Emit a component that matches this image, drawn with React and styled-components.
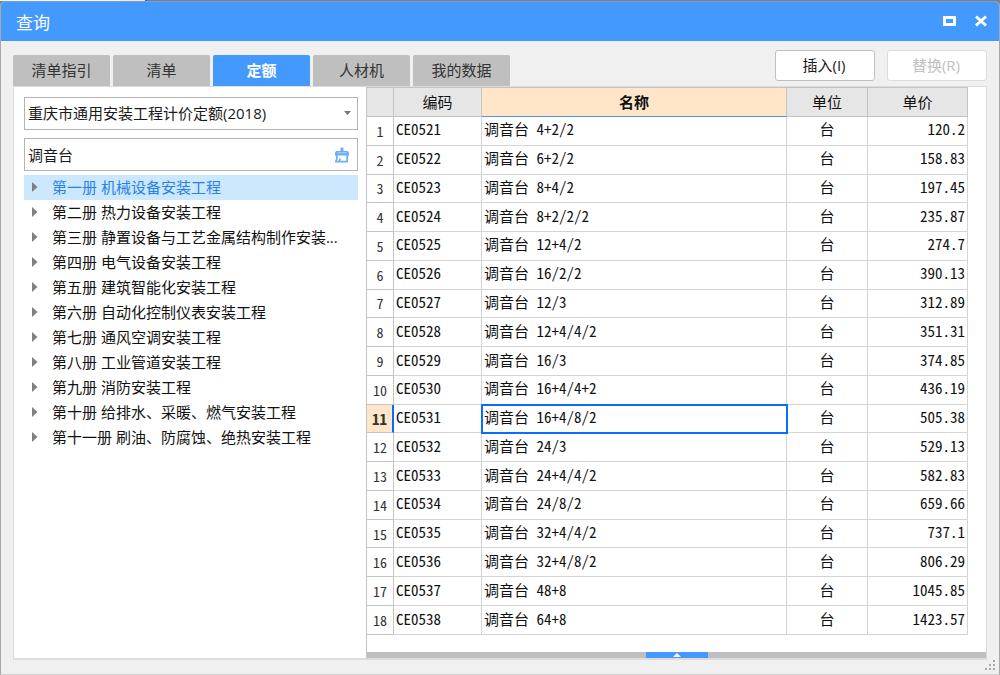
import React, { useState } from "react";
import styled, { createGlobalStyle } from "styled-components";

const GlobalStyle = createGlobalStyle`
  *, *::before, *::after { box-sizing: border-box; }
  body { margin: 0; background: #7f7f7f; }
  button, input, select { font: inherit; color: inherit; margin: 0; }
`;

const Desktop = styled.div`
  min-height: 100vh;
  display: flex;
  flex-direction: column;
  font: 15px/20px "Open Sans", "Noto Sans CJK SC", sans-serif;
  color: #1a1a1a;
`;

const Backdrop = styled.div`
  height: 1px;
  display: flex;
  background: #7f7f7f;
`;

const BackdropPiece = styled.span`
  width: ${(p) => p.$width}px;
  background: ${(p) => p.$color};
`;

const Dialog = styled.main`
  flex: 1;
  display: flex;
  flex-direction: column;
  border: 1px solid #a8a8a8;
  border-top-color: #6f9fd6;
  border-bottom-color: #cfcfcf;
  border-radius: 5px 5px 0 0;
  overflow: hidden;
  background: #f0f0f0;
`;

const TitleBar = styled.header`
  height: 39px;
  display: flex;
  align-items: center;
  padding: 0 10px 2px 15px;
  background: #4499ff;
  color: #fff;
`;

const Title = styled.h1`
  flex: 1;
  margin: 0;
  padding-top: 4px;
  font-size: 17px;
  line-height: 24px;
  font-weight: 400;
`;

const WindowControls = styled.div`
  display: flex;
  gap: 16px;
`;

const WindowButton = styled.button`
  width: 16px;
  height: 16px;
  padding: 0;
  border: 0;
  background: none;
  svg { display: block; }
`;

const Toolbar = styled.div`
  display: flex;
  align-items: flex-end;
  justify-content: space-between;
  padding: 9px 12px 0;
`;

const Tabs = styled.div`
  display: flex;
  gap: 3px;
`;

const Tab = styled.button`
  width: 97px;
  height: 31px;
  padding: 0 0 1px;
  border: 0;
  border-radius: 2px 2px 0 0;
  background: ${(p) => (p.$active ? "#4499ff" : "#bfbfbf")};
  color: ${(p) => (p.$active ? "#fff" : "#333")};
  font-weight: ${(p) => (p.$active ? 700 : 400)};
`;

const Actions = styled.div`
  display: flex;
  gap: 12px;
  padding-bottom: 5px;
`;

const ActionButton = styled.button`
  width: 100px;
  height: 31px;
  padding: 0 2px 1px 0;
  border: 1px solid #c0c0c0;
  border-radius: 3px;
  background: #fff;
  &:disabled { color: #c0c0c0; border-color: #dcdcdc; }
`;

const Panel = styled.section`
  flex: 1;
  display: flex;
  margin: 0 12px 14px;
  border: 1px solid #dcdcdc;
  border-bottom-width: 2px;
  background: #fff;
`;

const Sidebar = styled.aside`
  width: 352px;
  flex: none;
  padding: 10px 8px 10px 10px;
`;

const Field = styled.div`
  height: 33px;
  display: flex;
  align-items: center;
  position: relative;
  margin-bottom: 8px;
  border: 1px solid #b4b4b4;
  background: #fff;
`;

const QuotaSelect = styled.select`
  width: 100%;
  height: 100%;
  padding: 0 24px 2px 3px;
  border: 0;
  outline: 0;
  appearance: none;
  background: transparent;
`;

const SelectArrow = styled.svg`
  position: absolute;
  right: 6px;
  top: 13px;
  pointer-events: none;
`;

const SearchInput = styled.input`
  flex: 1;
  min-width: 0;
  height: 100%;
  padding: 0 3px;
  border: 0;
  outline: 0;
  background: transparent;
`;

const ClearButton = styled.button`
  width: 30px;
  height: 100%;
  display: grid;
  place-items: center;
  padding: 0;
  border: 0;
  background: none;
`;

const Tree = styled.ul`
  list-style: none;
  margin: -4px 0 0;
  padding: 0;
`;

const TreeItem = styled.li`
  height: 25px;
  display: flex;
  align-items: center;
  gap: 14px;
  padding: 0 0 1px 8px;
  white-space: nowrap;
  background: ${(p) => (p.$selected ? "#cce8ff" : "transparent")};
  color: ${(p) => (p.$selected ? "#2a80e8" : "#111")};
`;

const GridPane = styled.div`
  flex: 1;
  min-width: 0;
  display: flex;
  flex-direction: column;
  border-left: 1px solid #c4c4c4;
`;

const GridArea = styled.div`
  flex: 1;
  display: grid;
  padding: 0 18px 17px 0;
`;

const QuotaTable = styled.table`
  width: 100%;
  height: 100%;
  table-layout: fixed;
  border-collapse: separate;
  border-spacing: 0;
  font: 15px/20px "Noto Sans CJK SC", sans-serif;
  font-feature-settings: "hwid";
  color: #111;
`;

const Column = styled.col`
  width: ${(p) => (p.$width ? `${p.$width}px` : "auto")};
`;

const HeadCell = styled.th`
  height: 30px;
  padding: 0;
  border: 1px solid #c4c4c4;
  border-left: 0;
  border-bottom-color: ${(p) => (p.$current ? "#4499ff" : "#c4c4c4")};
  background: ${(p) => (p.$current ? "#ffe6c8" : "#e6e6e6")};
  font-weight: ${(p) => (p.$current ? 700 : 400)};
`;

const RowHead = styled.th`
  padding: 0;
  border-bottom: 1px solid #c4c4c4;
  border-right: ${(p) => (p.$current ? "2px solid #0a6cff" : "1px solid #c4c4c4")};
  background: ${(p) => (p.$current ? "#ffe6c8" : "#fff")};
  font-size: ${(p) => (p.$current ? 15 : 14)}px;
  font-weight: ${(p) => (p.$current ? 700 : 400)};
  color: #333;
`;

const Cell = styled.td`
  padding: 0 2px 3px;
  border: 0 solid #d4d4d4;
  border-width: 0 1px 1px 0;
  text-align: ${(p) => p.$align || "left"};
  outline: ${(p) => (p.$current ? "2px solid #0a6cff" : "none")};
  outline-offset: -1px;
`;

const Splitter = styled.div`
  height: 6px;
  display: flex;
  justify-content: center;
  background: #bfbfbf;
`;

const SplitterHandle = styled.button`
  width: 62px;
  height: 6px;
  display: grid;
  place-items: center;
  padding: 0;
  border: 0;
  background: #4499ff;
`;

const ResizeGrip = styled.svg`
  position: absolute;
  right: 4px;
  bottom: 4px;
`;

const tabs = ["清单指引", "清单", "定额", "人材机", "我的数据"];

const volumes = [
  "第一册 机械设备安装工程",
  "第二册 热力设备安装工程",
  "第三册 静置设备与工艺金属结构制作安装...",
  "第四册 电气设备安装工程",
  "第五册 建筑智能化安装工程",
  "第六册 自动化控制仪表安装工程",
  "第七册 通风空调安装工程",
  "第八册 工业管道安装工程",
  "第九册 消防安装工程",
  "第十册 给排水、采暖、燃气安装工程",
  "第十一册 刷油、防腐蚀、绝热安装工程",
];

const rows = [
  ["CE0521", "4+2/2", "120.2"],
  ["CE0522", "6+2/2", "158.83"],
  ["CE0523", "8+4/2", "197.45"],
  ["CE0524", "8+2/2/2", "235.87"],
  ["CE0525", "12+4/2", "274.7"],
  ["CE0526", "16/2/2", "390.13"],
  ["CE0527", "12/3", "312.89"],
  ["CE0528", "12+4/4/2", "351.31"],
  ["CE0529", "16/3", "374.85"],
  ["CE0530", "16+4/4+2", "436.19"],
  ["CE0531", "16+4/8/2", "505.38"],
  ["CE0532", "24/3", "529.13"],
  ["CE0533", "24+4/4/2", "582.83"],
  ["CE0534", "24/8/2", "659.66"],
  ["CE0535", "32+4/4/2", "737.1"],
  ["CE0536", "32+4/8/2", "806.29"],
  ["CE0537", "48+8", "1045.85"],
  ["CE0538", "64+8", "1423.57"],
];

const gripDots = [[8, 0], [4, 4], [8, 4], [0, 8], [4, 8], [8, 8]];

export default function App() {
  const [tab, setTab] = useState(2);
  const [query, setQuery] = useState("调音台");
  const [volume, setVolume] = useState(0);
  const [current, setCurrent] = useState(10);

  return (
    <Desktop>
      <GlobalStyle />
      <Backdrop>
        <BackdropPiece $width={120} $color="#f4f4f4" />
        <BackdropPiece $width={25} $color="#ffe6c8" />
        <BackdropPiece $width={2} $color="#0a6cff" />
      </Backdrop>
      <Dialog>
        <TitleBar>
          <Title>查询</Title>
          <WindowControls>
            <WindowButton aria-label="最大化">
              <svg width="16" height="16" viewBox="0 0 16 16">
                <path d="M3.500 4.500h10v7h-10z" fill="none" stroke="#fff" strokeWidth="3" />
              </svg>
            </WindowButton>
            <WindowButton aria-label="关闭">
              <svg width="16" height="16" viewBox="0 0 16 16">
                <path d="M3 3.500l10 9M13 3.500l-10 9" fill="none" stroke="#fff" strokeWidth="3" />
              </svg>
            </WindowButton>
          </WindowControls>
        </TitleBar>
        <Toolbar>
          <Tabs role="tablist">
            {tabs.map((name, i) => (
              <Tab key={name} role="tab" aria-selected={i === tab} $active={i === tab} onClick={() => setTab(i)}>
                {name}
              </Tab>
            ))}
          </Tabs>
          <Actions>
            <ActionButton>插入(I)</ActionButton>
            <ActionButton disabled>替换(R)</ActionButton>
          </Actions>
        </Toolbar>
        <Panel>
          <Sidebar>
            <Field>
              <QuotaSelect aria-label="定额库">
                <option>重庆市通用安装工程计价定额(2018)</option>
              </QuotaSelect>
              <SelectArrow width="7" height="4" viewBox="0 0 7 4">
                <path d="M0 0h7l-3.500 4z" fill="#777" />
              </SelectArrow>
            </Field>
            <Field>
              <SearchInput aria-label="搜索" value={query} onChange={(e) => setQuery(e.target.value)} />
              <ClearButton aria-label="清除" onClick={() => setQuery("")}>
                <svg width="16" height="16" viewBox="0 0 16 16">
                  <path d="M6.500 4V1.500q0-1 1-1h1q1 0 1 1V4h3.500q2 0 2 2v2.500H1V6q0-2 2-2z" fill="#6aabfa" />
                  <path d="M3.500 5.800h9" stroke="#b5d6ff" strokeWidth="1" />
                  <path d="M2.800 8v4.200L1.800 14.600h11.400V8M5.200 14.500l1-3" fill="none" stroke="#6aabfa" strokeWidth="1.700" strokeLinejoin="round" />
                </svg>
              </ClearButton>
            </Field>
            <Tree role="tree">
              {volumes.map((name, i) => (
                <TreeItem key={name} role="treeitem" aria-selected={i === volume} $selected={i === volume} onClick={() => setVolume(i)}>
                  <svg width="6" height="10" viewBox="0 0 6 10">
                    <path d="M0 0l5.500 5L0 10z" fill="#808080" />
                  </svg>
                  {name}
                </TreeItem>
              ))}
            </Tree>
          </Sidebar>
          <GridPane>
            <GridArea>
              <QuotaTable>
                <colgroup>
                  <Column $width={27} />
                  <Column $width={88} />
                  <Column />
                  <Column $width={81} />
                  <Column $width={100} />
                </colgroup>
                <thead>
                  <tr>
                    <HeadCell aria-label="序号" />
                    <HeadCell>编码</HeadCell>
                    <HeadCell $current>名称</HeadCell>
                    <HeadCell>单位</HeadCell>
                    <HeadCell>单价</HeadCell>
                  </tr>
                </thead>
                <tbody>
                  {rows.map(([code, spec, price], i) => (
                    <tr key={code} onClick={() => setCurrent(i)}>
                      <RowHead scope="row" $current={i === current}>{i + 1}</RowHead>
                      <Cell>{code}</Cell>
                      <Cell $current={i === current}>{`调音台 ${spec}`}</Cell>
                      <Cell $align="center">台</Cell>
                      <Cell $align="right">{price}</Cell>
                    </tr>
                  ))}
                </tbody>
              </QuotaTable>
            </GridArea>
            <Splitter>
              <SplitterHandle aria-label="展开">
                <svg width="8" height="4" viewBox="0 0 8 4">
                  <path d="M4 0l4 4H0z" fill="#fff" />
                </svg>
              </SplitterHandle>
            </Splitter>
          </GridPane>
        </Panel>
      </Dialog>
      <ResizeGrip width="11" height="11" viewBox="0 0 11 11">
        {gripDots.map(([x, y]) => (
          <rect key={`${x}-${y}`} x={x} y={y} width="2" height="2" fill="#aaa" />
        ))}
      </ResizeGrip>
    </Desktop>
  );
}
